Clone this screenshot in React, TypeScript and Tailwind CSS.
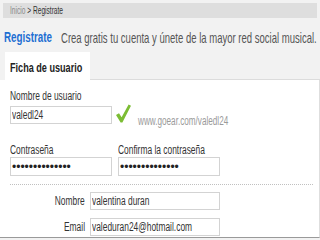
import type { ReactNode } from 'react'

// text in the shot is squeezed horizontally, so every run of text is narrowed
function Sq({
  children,
  right = false,
  scale = 'scale-x-[0.7]',
  className = '',
}: {
  children: ReactNode
  right?: boolean
  scale?: string
  className?: string
}) {
  return (
    <span className={`inline-block whitespace-nowrap ${scale} ${right ? 'origin-right' : 'origin-left'} ${className}`}>
      {children}
    </span>
  )
}

function Field({ width, children }: { width: string; children?: ReactNode }) {
  return (
    <div className={`${width} flex h-[18px] items-center border border-[#d3d3d3] bg-white pl-[1px] text-[12px] leading-none text-[#333]`}>
      {children}
    </div>
  )
}

const dots = '••••••••••••••'

export default function App() {
  return (
    <div className="h-[240px] w-[320px] overflow-hidden bg-[#f2f2f2] font-['Liberation_Sans',Arial,sans-serif]">
      {/* Breadcrumb */}
      <div className="px-[3px] pt-[3px]">
        <div className="flex h-[15px] items-center bg-[#dedede] pl-[7px] text-[10px] leading-none">
          <Sq scale="scale-x-[0.66]">
            <span className="text-[#8a8a8a]">Inicio</span>
            <span className="text-[#333]"> &gt; Registrate</span>
          </Sq>
        </div>
      </div>

      {/* Title */}
      <div className="mt-[10px] flex h-[18px] items-center pl-[4px] leading-none">
        <div className="w-[53px] text-[14px]">
          <Sq className="font-bold text-[#1e6fd2]">Registrate</Sq>
        </div>
        <div className="h-[16px] w-px bg-[#c8c8c8]" />
        <div className="ml-[4px] text-[15px]">
          <Sq scale="scale-x-[0.635]" className="text-[#555]">
            Crea gratis tu cuenta y únete de la mayor red social musical.
          </Sq>
        </div>
      </div>

      {/* Tabs */}
      <div className="mt-[6px] flex h-[28px]">
        <div className="ml-[5px] h-[28px] w-[85px] bg-white pl-[5px] pt-[8px] text-[13px] font-bold leading-[15px] text-[#222]">
          <Sq>Ficha de usuario</Sq>
        </div>
        <div className="flex-1 border-b border-[#dcdcdc]" />
      </div>

      {/* Form panel */}
      <div className="h-[158px] border-r border-b border-r-[#dedede] border-b-[#9a9a9a] bg-white pl-[10px] pt-[9px] text-[12px] leading-[14px] text-[#333]">
        <div className="h-[14px]">
          <Sq>Nombre de usuario</Sq>
        </div>
        <div className="mt-[3px] flex items-start">
          <Field width="w-[102px]">
            <Sq>valedl24</Sq>
          </Field>
          <svg width="15" height="19" viewBox="0 0 15 19" className="ml-[4px] mt-[-2px]">
            <polygon points="0,11 3,9.2 5.6,13.2 12.6,0.4 15,1.8 6.4,18.6 4.6,18.6" fill="#7cbd34" />
          </svg>
          <div className="ml-[7px] mt-[8px] text-[#9a9a9a]">
            <Sq scale="scale-x-[0.68]">www.goear.com/valedl24</Sq>
          </div>
        </div>

        <div className="mt-[15px] flex gap-[6px]">
          <div className="h-[14px] w-[102px]">
            <Sq>Contraseña</Sq>
          </div>
          <div className="h-[14px] w-[102px]">
            <Sq>Confirma la contraseña</Sq>
          </div>
        </div>
        <div className="flex gap-[6px]">
          <div className="flex h-[19px] w-[102px] items-center border border-[#d3d3d3] pl-[1px] text-[12px] leading-none text-[#222]">
            {dots}
          </div>
          <div className="flex h-[19px] w-[102px] items-center border border-[#d3d3d3] pl-[1px] text-[12px] leading-none text-[#222]">
            {dots}
          </div>
        </div>

        <div className="mt-[8px] w-[303px] border-t border-dotted border-[#c0c0c0]" />

        <div className="mt-[7px] flex items-center">
          <div className="flex w-[75px] justify-end">
            <Sq right>Nombre</Sq>
          </div>
          <div className="ml-[5px]">
            <Field width="w-[130px]">
              <Sq>valentina duran</Sq>
            </Field>
          </div>
        </div>
        <div className="mt-[8px] flex items-center">
          <div className="flex w-[75px] justify-end">
            <Sq right>Email</Sq>
          </div>
          <div className="ml-[5px]">
            <Field width="w-[130px]">
              <Sq>valeduran24@hotmail.com</Sq>
            </Field>
          </div>
        </div>
      </div>
    </div>
  )
}
